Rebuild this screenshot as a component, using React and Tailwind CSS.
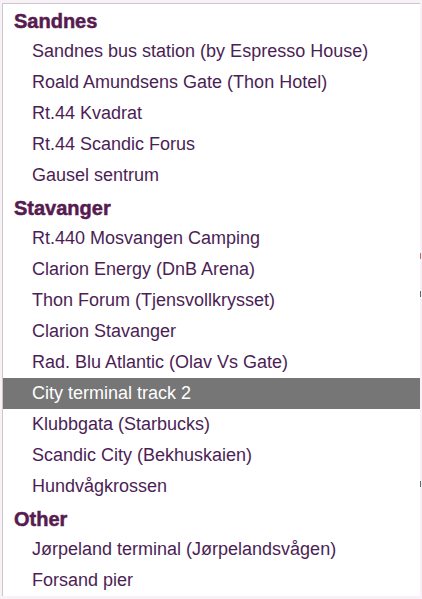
import React from 'react';

const groups = [
  {
    name: 'Sandnes',
    items: [
      'Sandnes bus station (by Espresso House)',
      'Roald Amundsens Gate (Thon Hotel)',
      'Rt.44 Kvadrat',
      'Rt.44 Scandic Forus',
      'Gausel sentrum',
    ],
  },
  {
    name: 'Stavanger',
    items: [
      'Rt.440 Mosvangen Camping',
      'Clarion Energy (DnB Arena)',
      'Thon Forum (Tjensvollkrysset)',
      'Clarion Stavanger',
      'Rad. Blu Atlantic (Olav Vs Gate)',
      'City terminal track 2',
      'Klubbgata (Starbucks)',
      'Scandic City (Bekhuskaien)',
      'Hundvågkrossen',
    ],
  },
  {
    name: 'Other',
    items: ['Jørpeland terminal (Jørpelandsvågen)', 'Forsand pier'],
  },
];

const selected = 'City terminal track 2';

export default function App() {
  return (
    <div className="h-[599px] w-[422px] overflow-hidden bg-[#f8f2f8] pl-[2px] pt-[3px] font-['Liberation_Sans',Arial,sans-serif]">
      <div className="flex">
        <ul className="w-[418px] h-[593px] border-l border-t border-[#c9c9c9] bg-white">
          {groups.map((g) => (
            <li key={g.name}>
              <div className="flex h-[32px] items-center pl-[11px] pt-[2px] text-[20px] font-bold text-[#561b4f] [-webkit-text-stroke:0.5px_#561b4f]">
                {g.name}
              </div>
              <ul>
                {g.items.map((it) => (
                  <li
                    key={it}
                    className={
                      it === selected
                        ? 'flex h-[31px] items-center bg-[#767676] pl-[29px] text-[18px] text-white'
                        : 'flex h-[31px] items-center pl-[29px] text-[18px] text-[#4b1e55]'
                    }
                  >
                    {it}
                  </li>
                ))}
              </ul>
            </li>
          ))}
        </ul>
        <div className="relative w-[2px] h-[593px]">
          <span className="absolute left-0 top-[250px] h-[6px] w-[1px] bg-[#c06070]" />
          <span className="absolute left-0 top-[288px] h-[6px] w-[1px] bg-[#666]" />
          <span className="absolute left-0 top-[478px] h-[6px] w-[1px] bg-[#666]" />
        </div>
      </div>
    </div>
  );
}
